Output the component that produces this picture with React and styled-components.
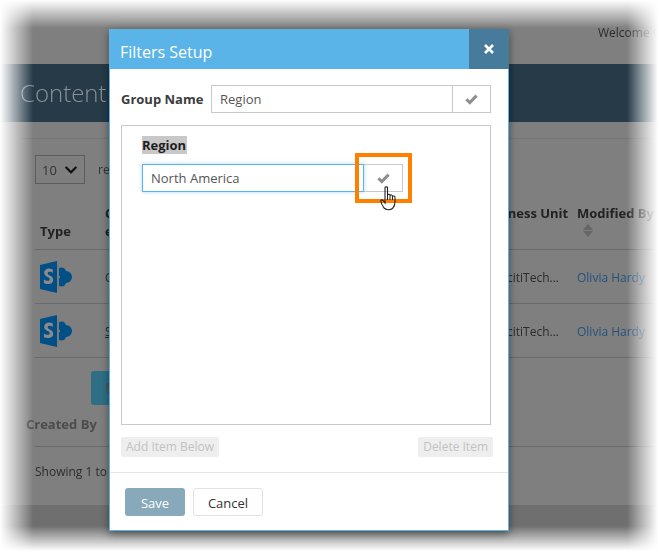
import React from 'react';
import styled, { createGlobalStyle } from 'styled-components';
import { FaChevronDown } from 'react-icons/fa';

const GlobalStyle = createGlobalStyle`
  html, body {
    margin: 0;
    padding: 0;
    background: #fff;
    font-family: "Open Sans", "Liberation Sans", sans-serif;
  }
`;

const Stage = styled.div`
  position: relative;
  width: 660px;
  height: 553px;
  overflow: hidden;
`;

const Backdrop = styled.div`
  width: 660px;
  height: 553px;
  background: linear-gradient(#7f7f7f 0 505px, #6f6f6f 505px);
  color: #333;
  font-size: 12px;
  -webkit-mask-image: linear-gradient(to right, transparent 0, #000 33px, #000 627px, transparent 658px),
    linear-gradient(to bottom, transparent 0, #000 28px, #000 526px, transparent 551px);
  mask-image: linear-gradient(to right, transparent 0, #000 33px, #000 627px, transparent 658px),
    linear-gradient(to bottom, transparent 0, #000 28px, #000 526px, transparent 551px);
  -webkit-mask-composite: source-in;
  mask-composite: intersect;
`;

const TopBar = styled.div`
  height: 64px;
  box-sizing: border-box;
  padding: 25px 0 0 598px;
  white-space: nowrap;
  line-height: 16px;
  color: #2c2c2c;
`;

const Band = styled.div`
  height: 58px;
  background: #263a48;
  box-sizing: border-box;
  padding: 12px 0 0 20px;
  font-size: 24px;
  font-weight: 300;
  line-height: 34px;
  color: #8b9298;
`;

const ContentArea = styled.div`
  padding: 16px 0 0 35px;
`;

const TopRule = styled.div`
  height: 1px;
  margin: 0 0 16px -14px;
  background: #767676;
`;

const LengthRow = styled.div`
  display: flex;
  align-items: center;
  gap: 13px;
  height: 29px;
`;

const LengthSelect = styled.div`
  display: flex;
  align-items: center;
  justify-content: space-between;
  box-sizing: border-box;
  width: 50px;
  height: 29px;
  padding: 0 6px;
  border: 1px solid #5c5c5c;
  font-size: 13px;
  color: #333;
  svg { width: 14px; height: 14px; color: #111; }
`;

const columns = '70px 375px 97px 80px';

const TableHead = styled.div`
  display: grid;
  grid-template-columns: ${columns};
  align-items: end;
  height: 56px;
  margin-top: 10px;
  padding-bottom: 9px;
  box-sizing: border-box;
  width: 625px;
  font-size: 13px;
  font-weight: 700;
  line-height: 18px;
  color: #222;
  border-bottom: 1px solid #6a6a6a;
`;

const HeadCell = styled.div`
  height: ${(p) => (p.$single ? 18 : 36)}px;
  padding-left: ${(p) => p.$pad}px;
  white-space: nowrap;
`;

const SortMark = styled.div`
  position: relative;
  width: 10px;
  height: 14px;
  margin: 2px 0 0 6px;
  &::before, &::after {
    content: '';
    position: absolute;
    left: 0;
    border-left: 5px solid transparent;
    border-right: 5px solid transparent;
  }
  &::before { top: 0; border-bottom: 6px solid #666; }
  &::after { top: 7px; border-top: 6px solid #666; }
`;

const Row = styled.div`
  display: grid;
  grid-template-columns: ${columns};
  align-items: center;
  height: 54px;
  box-sizing: border-box;
  width: 625px;
  border-bottom: 1px solid #6a6a6a;
  font-size: 12px;
  color: #2c2c2c;
  white-space: nowrap;
`;

const IconCell = styled.div`
  display: flex;
  padding-left: 5px;
`;

const NameCell = styled.div`
  padding-top: 2px;
  text-decoration: ${(p) => (p.$underline ? 'underline' : 'none')};
`;

const UnitCell = styled.div`
  padding: 2px 18px 0 0;
  text-align: right;
`;

const OwnerLink = styled.div`
  padding-top: 2px;
  color: #24527a;
`;

const NewButton = styled.div`
  box-sizing: border-box;
  width: 60px;
  height: 34px;
  margin: 13px 0 0 56px;
  padding-left: 14px;
  border-radius: 3px;
  background: #2f6f85;
  color: #555;
  font-weight: 700;
  font-size: 14px;
  line-height: 34px;
`;

const CreatedBy = styled.div`
  margin: 9px 0 0 -9px;
  font-size: 13px;
  font-weight: 700;
  line-height: 20px;
  color: #4c4c4c;
`;

const FooterRule = styled.div`
  height: 1px;
  margin-top: 12px;
  width: 625px;
  background: #6a6a6a;
`;

const Showing = styled.div`
  margin-top: 16px;
  line-height: 17px;
  color: #2c2c2c;
`;

const Modal = styled.div`
  position: absolute;
  left: 109px;
  top: 29px;
  width: 400px;
  height: 502px;
  box-sizing: border-box;
  background: #fff;
  border: 1px solid #5ab4e8;
  border-top: 0;
  box-shadow: 0 3px 8px rgba(0, 0, 0, 0.45);
  color: #333;
`;

const ModalHeader = styled.div`
  display: flex;
  height: 40px;
  margin: 0 -1px;
  background: #5ab4e8;
`;

const ModalTitle = styled.div`
  flex: 1;
  padding-left: 11px;
  font-size: 16px;
  line-height: 46px;
  color: #fff;
`;

const CloseBox = styled.div`
  display: flex;
  align-items: center;
  justify-content: center;
  width: 40px;
  background: #477b9b;
`;

const ModalBody = styled.div`
  height: 404px;
  box-sizing: border-box;
  padding: 16px 15px 0 11px;
  border-bottom: 1px solid #e4e4e4;
`;

const GroupRow = styled.div`
  display: flex;
  align-items: center;
  height: 28px;
`;

const FieldLabel = styled.div`
  width: 90px;
  font-size: 13px;
  font-weight: 700;
  color: #3c3c3c;
  white-space: nowrap;
`;

const TextBox = styled.div`
  box-sizing: border-box;
  width: ${(p) => p.$w}px;
  height: 28px;
  padding-left: 8px;
  border: 1px solid ${(p) => (p.$active ? '#5ab4e8' : '#c9c9c9')};
  font-size: 13px;
  line-height: 26px;
  color: #555;
  box-shadow: ${(p) => (p.$active ? '0 0 4px rgba(90, 180, 232, 0.5)' : 'none')};
`;

const CheckButton = styled.div`
  display: flex;
  align-items: center;
  justify-content: center;
  box-sizing: border-box;
  width: ${(p) => p.$w}px;
  height: 28px;
  border: 1px solid #c9c9c9;
  border-left: 0;
`;

const ItemsPanel = styled.div`
  box-sizing: border-box;
  width: 370px;
  height: 300px;
  margin-top: 12px;
  padding: 10px 20px 0;
  border: 1px solid #c9c9c9;
`;

const RegionLabel = styled.span`
  display: block;
  width: fit-content;
  padding-right: 1px;
  background: #c8c8c8;
  font-size: 13px;
  font-weight: 700;
  line-height: 18px;
  color: #1e1e1e;
`;

const ItemRow = styled.div`
  position: relative;
  display: flex;
  margin-top: 10px;
`;

const Highlight = styled.div`
  position: absolute;
  left: 213px;
  top: -11px;
  width: 57px;
  height: 50px;
  box-sizing: border-box;
  border: 4px solid #ff8000;
`;

const HandCursor = styled.svg`
  position: absolute;
  left: 238px;
  top: 22px;
  width: 17px;
  height: 26px;
`;

const ItemActions = styled.div`
  display: flex;
  justify-content: space-between;
  width: 372px;
  margin-top: 12px;
`;

const GhostButton = styled.div`
  height: 20px;
  padding: 0 5px;
  border-radius: 2px;
  background: #eeeeee;
  color: #c2c2c2;
  font-size: 12px;
  line-height: 20px;
  white-space: nowrap;
`;

const ModalFooter = styled.div`
  display: flex;
  gap: 8px;
  padding: 15px 0 0 15px;
`;

const SaveButton = styled.div`
  width: 60px;
  height: 28px;
  border-radius: 3px;
  background: #87a9ba;
  color: #fff;
  font-size: 13px;
  line-height: 30px;
  text-align: center;
`;

const CancelButton = styled.div`
  box-sizing: border-box;
  width: 70px;
  height: 28px;
  border: 1px solid #e2e2e2;
  border-radius: 3px;
  background: #fff;
  color: #333;
  font-size: 13px;
  line-height: 28px;
  text-align: center;
`;

function CheckIcon() {
  return (
    <svg width="13" height="11" viewBox="0 0 13 11">
      <path d="M1.4 5.2 L4.8 8.6 L11.6 1.6" fill="none" stroke="#8e8e8e" strokeWidth="3" />
    </svg>
  );
}

function CloseIcon() {
  return (
    <svg width="10" height="10" viewBox="0 0 10 10">
      <path d="M1 1 L9 9 M9 1 L1 9" fill="none" stroke="#fff" strokeWidth="2.6" />
    </svg>
  );
}

function SharePointIcon() {
  return (
    <svg width="32" height="32" viewBox="0 0 32 32">
      <circle cx="21.5" cy="11" r="4.5" fill="#004f86" />
      <circle cx="26" cy="16" r="6" fill="#004f86" />
      <circle cx="21.5" cy="21" r="4.5" fill="#004f86" />
      <path d="M0 4 L17 0 V32 L0 28 Z" fill="#004f86" />
      <rect x="17" y="4" width="2" height="24" fill="#7a7a7a" />
      <path
        d="M12.8 8.6 C11.6 7.9 10.3 7.6 9 7.6 C6.2 7.6 4.2 9.3 4.2 11.8 C4.2 14 5.5 15.1 7.6 16.1 C9.1 16.8 9.7 17.3 9.7 18.2 C9.7 19.2 8.8 19.8 7.6 19.8 C6.3 19.8 5 19.3 3.9 18.5 V22 C5 22.7 6.5 23 8 23 C11 23 13.2 21.4 13.2 18.7 C13.2 16.6 12 15.4 9.9 14.4 C8.3 13.6 7.7 13.1 7.7 12.2 C7.7 11.3 8.4 10.8 9.5 10.8 C10.7 10.8 11.9 11.3 12.8 12 Z"
        fill="#8b8b8b"
      />
    </svg>
  );
}

export default function App() {
  return (
    <Stage>
      <GlobalStyle />
      <Backdrop>
        <TopBar>Welcome Olivia</TopBar>
        <Band>Content</Band>
        <ContentArea>
          <TopRule />
          <LengthRow>
            <LengthSelect>
              10 <FaChevronDown />
            </LengthSelect>
            <span>records</span>
          </LengthRow>
          <TableHead>
            <HeadCell $single $pad={5}>Type</HeadCell>
            <HeadCell $pad={0}>
              Content
              <br />
              e
            </HeadCell>
            <HeadCell $pad={0}>Business Unit</HeadCell>
            <HeadCell $pad={0}>
              Modified By
              <SortMark />
            </HeadCell>
          </TableHead>
          {['C', 'S'].map((name) => (
            <Row key={name}>
              <IconCell>
                <SharePointIcon />
              </IconCell>
              <NameCell $underline={name === 'S'}>{name}</NameCell>
              <UnitCell>VelocitiTech...</UnitCell>
              <OwnerLink>Olivia Hardy</OwnerLink>
            </Row>
          ))}
          <NewButton>N</NewButton>
          <CreatedBy>Created By</CreatedBy>
          <FooterRule />
          <Showing>Showing 1 to 2 of 2 entries</Showing>
        </ContentArea>
      </Backdrop>

      <Modal>
        <ModalHeader>
          <ModalTitle>Filters Setup</ModalTitle>
          <CloseBox>
            <CloseIcon />
          </CloseBox>
        </ModalHeader>
        <ModalBody>
          <GroupRow>
            <FieldLabel>Group Name</FieldLabel>
            <TextBox $w={242}>Region</TextBox>
            <CheckButton $w={38}>
              <CheckIcon />
            </CheckButton>
          </GroupRow>
          <ItemsPanel>
            <RegionLabel>Region</RegionLabel>
            <ItemRow>
              <TextBox $w={222} $active>
                North America
              </TextBox>
              <CheckButton $w={39}>
                <CheckIcon />
              </CheckButton>
              <Highlight />
              <HandCursor viewBox="0 0 17 26">
                <path
                  d="M5 1.5 C5 .5 7.5 .5 7.5 1.5 V9 C8 8 10 8 10 9.5 C10.5 8.5 12.5 8.8 12.5 10.3 C13.2 9.6 15 10 15 11.5 V16 C15 19 14 21 12.5 22.5 C10 24.5 6 24 4 22 C3 20.5 1 17 .8 15 C.8 13.5 2.5 13.5 3.5 15 L5 17 Z"
                  fill="none"
                  stroke="#222"
                  strokeWidth="1.1"
                />
                <path d="M7.5 9 V14 M10 9.5 V14 M12.5 10.3 V14" stroke="#222" strokeWidth="1" fill="none" />
              </HandCursor>
            </ItemRow>
          </ItemsPanel>
          <ItemActions>
            <GhostButton>Add Item Below</GhostButton>
            <GhostButton>Delete Item</GhostButton>
          </ItemActions>
        </ModalBody>
        <ModalFooter>
          <SaveButton>Save</SaveButton>
          <CancelButton>Cancel</CancelButton>
        </ModalFooter>
      </Modal>
    </Stage>
  );
}
